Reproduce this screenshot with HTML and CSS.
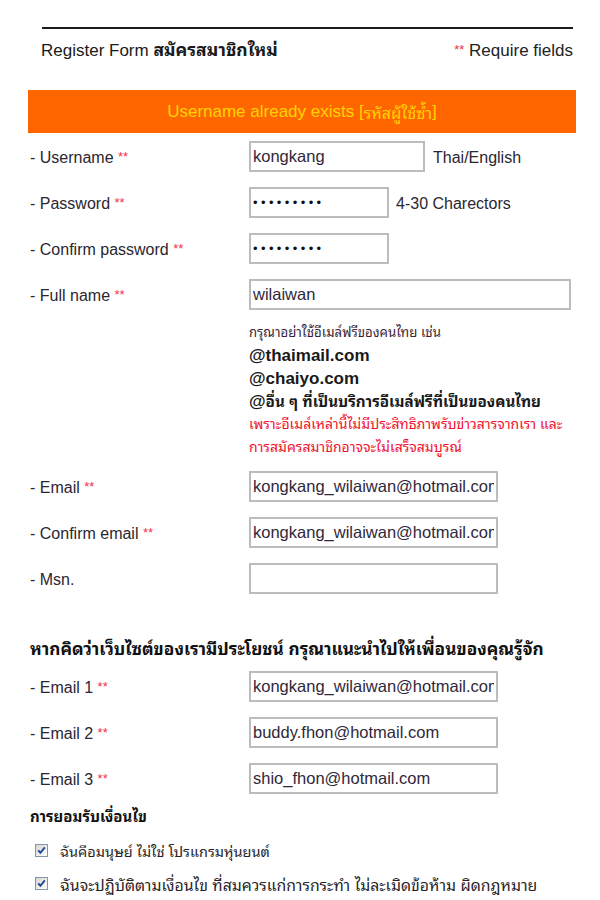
FILE: index.html
```html
<!DOCTYPE html>
<html lang="th">
<head>
<meta charset="utf-8">
<title>Register Form</title>
<link rel="stylesheet" href="styles.css">
</head>
<body>
<div class="page">
  <div class="rule"></div>
  <div class="head">
    <h1 class="title">Register Form <span class="th-bold">สมัครสมาชิกใหม่</span></h1>
    <span class="req"><span class="star">**</span> Require fields</span>
  </div>
  <div class="alert">Username already exists [<span class="alert-th">รหัสผู้ใช้ซ้ำ</span>]</div>

  <div class="row">
    <span class="label">- Username <span class="star">**</span></span>
    <div class="field"><input class="inp w-user" type="text" value="kongkang"><span class="hint">Thai/English</span></div>
  </div>
  <div class="row">
    <span class="label">- Password <span class="star">**</span></span>
    <div class="field"><input class="inp w-pass" type="password" value="kongkang1"><span class="hint">4-30 Charectors</span></div>
  </div>
  <div class="row">
    <span class="label">- Confirm password <span class="star">**</span></span>
    <div class="field"><input class="inp w-pass" type="password" value="kongkang1"></div>
  </div>
  <div class="row">
    <span class="label">- Full name <span class="star">**</span></span>
    <div class="field"><input class="inp w-name" type="text" value="wilaiwan"></div>
  </div>

  <div class="note">
    <div class="note-small">กรุณาอย่าใช้อีเมล์ฟรีของคนไทย เช่น</div>
    <div class="note-big">@thaimail.com</div>
    <div class="note-big">@chaiyo.com</div>
    <div class="note-big">@<span class="note-big-th">อื่น ๆ ที่เป็นบริการอีเมล์ฟรีที่เป็นของคนไทย</span></div>
    <div class="note-red">เพราะอีเมล์เหล่านี้ไม่มีประสิทธิภาพรับข่าวสารจากเรา และ</div>
    <div class="note-red">การสมัครสมาชิกอาจจะไม่เสร็จสมบูรณ์</div>
  </div>

  <div class="row">
    <span class="label">- Email <span class="star">**</span></span>
    <div class="field"><input class="inp w-mail" type="text" value="kongkang_wilaiwan@hotmail.com"></div>
  </div>
  <div class="row">
    <span class="label">- Confirm email <span class="star">**</span></span>
    <div class="field"><input class="inp w-mail" type="text" value="kongkang_wilaiwan@hotmail.com"></div>
  </div>
  <div class="row">
    <span class="label">- Msn.</span>
    <div class="field"><input class="inp w-mail" type="text" value=""></div>
  </div>

  <h2 class="section">หากคิดว่าเว็บไซต์ของเรามีประโยชน์ กรุณาแนะนำไปให้เพื่อนของคุณรู้จัก</h2>

  <div class="row">
    <span class="label">- Email 1 <span class="star">**</span></span>
    <div class="field"><input class="inp w-mail" type="text" value="kongkang_wilaiwan@hotmail.com"></div>
  </div>
  <div class="row">
    <span class="label">- Email 2 <span class="star">**</span></span>
    <div class="field"><input class="inp w-mail" type="text" value="buddy.fhon@hotmail.com"></div>
  </div>
  <div class="row">
    <span class="label">- Email 3 <span class="star">**</span></span>
    <div class="field"><input class="inp w-mail" type="text" value="shio_fhon@hotmail.com"></div>
  </div>

  <h2 class="section2">การยอมรับเงื่อนไข</h2>
  <div class="checks">
    <div class="check">
      <span class="box"><svg viewBox="0 0 13 13" width="13" height="13"><path d="M3.2 6.4 L5.4 8.8 L9.8 3.4" fill="none" stroke="#26499b" stroke-width="2"/></svg></span>
      <span class="check-text">ฉันคือมนุษย์ ไม่ใช่ โปรแกรมหุ่นยนต์</span>
    </div>
    <div class="check">
      <span class="box"><svg viewBox="0 0 13 13" width="13" height="13"><path d="M3.2 6.4 L5.4 8.8 L9.8 3.4" fill="none" stroke="#26499b" stroke-width="2"/></svg></span>
      <span class="check-text wide">ฉันจะปฏิบัติตามเงื่อนไข ที่สมควรแก่การกระทำ ไม่ละเมิดข้อห้าม ผิดกฎหมาย</span>
    </div>
  </div>
</div>
</body>
</html>
```

FILE: styles.css
```css
* { box-sizing: border-box; }
html, body { margin: 0; padding: 0; background: #ffffff; }
body {
  font-family: "Liberation Sans", Arial, "Noto Sans Thai Looped", "Noto Looped Thai", Tahoma, "Garuda", "Loma", "Noto Sans Thai", sans-serif;
  font-size: 16px;
  color: #2a2a2a;
}
.page {
  width: 576px;
  padding-left: 28px;
}
.rule {
  height: 2px;
  background: #1c1c1c;
  margin: 27px 3px 0 14px;
}
.head {
  display: flex;
  justify-content: space-between;
  align-items: flex-start;
  margin: 0 3px 0 13px;
  padding-top: 11px;
  height: 61px;
}
.title {
  margin: 0;
  font-size: 17px;
  line-height: 20px;
  height: 20px;
  font-weight: normal;
  color: #1a1a1a;
}
.th-bold {
  font-weight: bold;
  font-size: 17.5px;
}
.req {
  font-size: 17px;
  line-height: 20px;
  height: 20px;
  color: #222;
}
.star {
  color: #f0334b;
  font-size: 13px;
  vertical-align: 2px;
}
.alert {
  height: 43px;
  background: #ff6600;
  color: #ffd400;
  display: flex;
  align-items: center;
  justify-content: center;
  font-size: 17px;
  white-space: pre;
}
.alert-th { font-size: 16px; }
.row {
  display: grid;
  grid-template-columns: 221px 1fr;
  align-items: center;
  height: 46px;
}
.label {
  padding: 3px 0 0 2px;
  color: #2b2630;
}
.field {
  display: flex;
  align-items: center;
  gap: 8px;
}
.inp {
  height: 31px;
  border: 2px solid #bcbcbc;
  padding: 0 2px;
  font-family: inherit;
  font-size: 16.5px;
  color: #30283a;
  background: #fff;
  outline: none;
}
.inp[type="password"] {
  font-size: 13px;
  letter-spacing: 3.4px;
  color: #111;
}
.w-user { width: 176px; }
.w-pass { width: 140px; }
.w-name { width: 322px; }
.w-mail { width: 249px; }
.hint {
  padding-top: 3px;
  color: #2b2630;
}
.field .w-pass + .hint { margin-left: -1px; }
.note {
  margin-left: 221px;
  padding: 5px 0 4.5px;
  line-height: 23px;
}
.note-small {
  font-size: 13.2px;
  line-height: 22px;
  color: #3c1f36;
}
.note-big {
  font-size: 17px;
  font-weight: bold;
  color: #1a1a1a;
}
.note-big-th { font-size: 15.2px; }
.note-red {
  font-size: 14px;
  color: #f0122e;
}
.section {
  margin: 0;
  padding: 35px 0 3px 2px;
  font-size: 17.2px;
  line-height: 24px;
  font-weight: bold;
  color: #111;
}
.section2 {
  margin: 0;
  padding: 3px 0 0 2px;
  font-size: 15px;
  line-height: 24px;
  font-weight: bold;
  color: #111;
}
.checks { margin-top: 5.5px; }
.check {
  display: flex;
  align-items: center;
  height: 33px;
  padding-left: 7px;
  gap: 12px;
  font-size: 14.5px;
  color: #2a1f2a;
}
.check-text.wide { font-size: 15.8px; }
.box {
  width: 13px;
  height: 13px;
  border: 1px solid #8594b0;
  background: linear-gradient(135deg, #d6d6d0 0%, #efefeb 60%, #ffffff 100%);
  display: flex;
  flex: none;
}
.box svg { display: block; margin: -1px; }
```
